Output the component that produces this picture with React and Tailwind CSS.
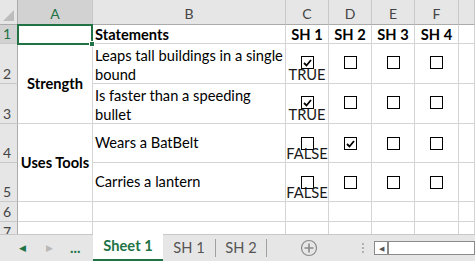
import { Fragment } from 'react'

const COLS = ['A', 'B', 'C', 'D', 'E', 'F', '']
const FONT = { fontFamily: 'Lato, "Open Sans", sans-serif' }

function Box({ checked }) {
  return (
    <span className="flex h-[13px] w-[13px] items-center justify-center border border-black bg-white">
      {checked && (
        <svg width="9" height="8" viewBox="0 0 9 8">
          <path d="M1 4 L3.5 6.5 L8 1" fill="none" stroke="black" strokeWidth="1.8" />
        </svg>
      )}
    </span>
  )
}

function BoxCell({ checked, label, top, gap }) {
  return (
    <div className="relative border-r border-b border-[#d4d4d4]">
      <div className={`absolute left-0 right-0 flex flex-col items-center ${top}`}>
        <Box checked={checked} />
        {label && <span className={`${gap} text-[14.67px] leading-[16px] text-[#1a1a1a]`}>{label}</span>}
      </div>
    </div>
  )
}

function RowNum({ n, active }) {
  return (
    <div
      className={`flex items-end border-r border-b border-r-[#ababab] border-b-[#c8c8c8] pl-[3px] text-[14px] leading-[18px] ${
        active ? 'bg-[#d2d2d2] text-[#217346]' : 'bg-[#e6e6e6] text-[#444]'
      }`}
    >
      {n}
    </div>
  )
}

const cell = 'border-r border-b border-[#d4d4d4]'

export default function App() {
  return (
    <div className="flex h-[261px] w-[475px] flex-col overflow-hidden bg-white" style={FONT}>
      <div className="relative grid h-[234px] grid-cols-[18px_75px_193px_43px_43px_43px_44px_1fr] grid-rows-[25px_19px_40px_40px_39px_39px_20px_20px] overflow-hidden">
        <div className="relative border-r border-b border-[#ababab] bg-[#e6e6e6]">
          <div className="absolute bottom-[3px] right-[3px] h-0 w-0 border-b-[11px] border-l-[11px] border-b-[#bdbdbd] border-l-transparent" />
        </div>
        {COLS.map((c, i) => (
          <div
            key={i}
            className={`flex items-center justify-center border-r border-b border-r-[#c8c8c8] border-b-[#ababab] pt-[3px] text-[14px] ${
              i === 0 ? 'bg-[#d2d2d2] text-[#217346]' : 'bg-[#e6e6e6] text-[#444]'
            }`}
          >
            {c}
          </div>
        ))}

        <RowNum n={1} active />
        <div className={cell} />
        <div className={`${cell} pl-[2px] text-[14.67px] font-bold leading-[19px]`}>Statements</div>
        {['SH 1', 'SH 2', 'SH 3', 'SH 4'].map((s) => (
          <div key={s} className={`${cell} text-center text-[14.67px] font-bold leading-[19px]`}>
            {s}
          </div>
        ))}
        <div className={cell} />

        <RowNum n={2} />
        <div className={`${cell} row-span-2 flex items-center justify-center text-[14.67px] font-bold`}>Strength</div>
        <div className={`${cell} pl-[2px] pt-[2px] text-[14.67px] leading-[19px]`}>
          Leaps tall buildings in a single
          <br />
          bound
        </div>
        <BoxCell checked label="TRUE" top="top-[12px]" gap="-mt-[2px]" />
        <BoxCell top="top-[12px]" />
        <BoxCell top="top-[12px]" />
        <BoxCell top="top-[12px]" />
        <div className={cell} />

        <RowNum n={3} />
        <div className={`${cell} pl-[2px] pt-[2px] text-[14.67px] leading-[19px]`}>
          Is faster than a speeding
          <br />
          bullet
        </div>
        <BoxCell checked label="TRUE" top="top-[12px]" gap="-mt-[2px]" />
        <BoxCell top="top-[12px]" />
        <BoxCell top="top-[12px]" />
        <BoxCell top="top-[12px]" />
        <div className={cell} />

        <RowNum n={4} />
        <div className={`${cell} row-span-2 flex items-center justify-center text-[14.67px] font-bold`}>Uses Tools</div>
        <div className={`${cell} flex items-center pl-[2px] text-[14.67px]`}>Wears a BatBelt</div>
        <BoxCell label="FALSE" top="top-[13px]" gap="-mt-[4px]" />
        <BoxCell checked top="top-[13px]" />
        <BoxCell top="top-[13px]" />
        <BoxCell top="top-[13px]" />
        <div className={cell} />

        <RowNum n={5} />
        <div className={`${cell} flex items-center pl-[2px] text-[14.67px]`}>Carries a lantern</div>
        <BoxCell label="FALSE" top="top-[13px]" gap="-mt-[4px]" />
        <BoxCell top="top-[13px]" />
        <BoxCell top="top-[13px]" />
        <BoxCell top="top-[13px]" />
        <div className={cell} />

        {[6, 7].map((n) => (
          <Fragment key={n}>
            <RowNum n={n} />
            {COLS.map((c, i) => (
              <div key={i} className={cell} />
            ))}
          </Fragment>
        ))}

        <div className="pointer-events-none absolute left-[17px] top-[24px] h-[21px] w-[76px] border-2 border-[#217346]">
          <div className="absolute -bottom-[4px] -right-[4px] h-[6px] w-[6px] border border-white bg-[#217346]" />
        </div>
      </div>

      <div className="flex h-[27px] items-stretch border-t border-[#c8c8c8] bg-[#e6e6e6] text-[14.67px]">
        <div className="flex w-[93px] items-center">
          <span className="ml-[19px] text-[9px] text-[#217346]">◀</span>
          <span className="ml-[20px] text-[9px] text-[#b8b8b8]">▶</span>
          <span className="ml-[17px] font-bold leading-none text-[#217346]">...</span>
        </div>
        <div className="-mt-px flex w-[70px] items-center justify-center border-b-2 border-[#217346] bg-white pb-[1px] font-bold text-[#217346]">
          Sheet 1
        </div>
        <div className="flex w-[52px] items-center justify-center text-[#555]">SH 1</div>
        <div className="my-[4px] w-px bg-[#a0a0a0]" />
        <div className="flex w-[50px] items-center justify-center text-[#555]">SH 2</div>
        <div className="my-[4px] w-px bg-[#a0a0a0]" />
        <div className="flex w-[84px] items-center justify-center">
          <svg width="18" height="18" viewBox="0 0 18 18">
            <circle cx="9" cy="9" r="7.5" fill="none" stroke="#8a8a8a" strokeWidth="1.2" />
            <path d="M9 4.5 V13.5 M4.5 9 H13.5" stroke="#8a8a8a" strokeWidth="1.6" />
          </svg>
        </div>
        <div className="flex w-[23px] flex-col items-center justify-center gap-[2px]">
          <span className="h-[2px] w-[2px] bg-[#b0b0b0]" />
          <span className="h-[2px] w-[2px] bg-[#b0b0b0]" />
          <span className="h-[2px] w-[2px] bg-[#b0b0b0]" />
        </div>
        <div className="my-[6px] flex flex-1 border border-[#8a8a8a] bg-white">
          <div className="flex w-[14px] items-center justify-center border-r-2 border-[#8a8a8a] text-[7px] text-[#555]">◀</div>
        </div>
      </div>
    </div>
  )
}
